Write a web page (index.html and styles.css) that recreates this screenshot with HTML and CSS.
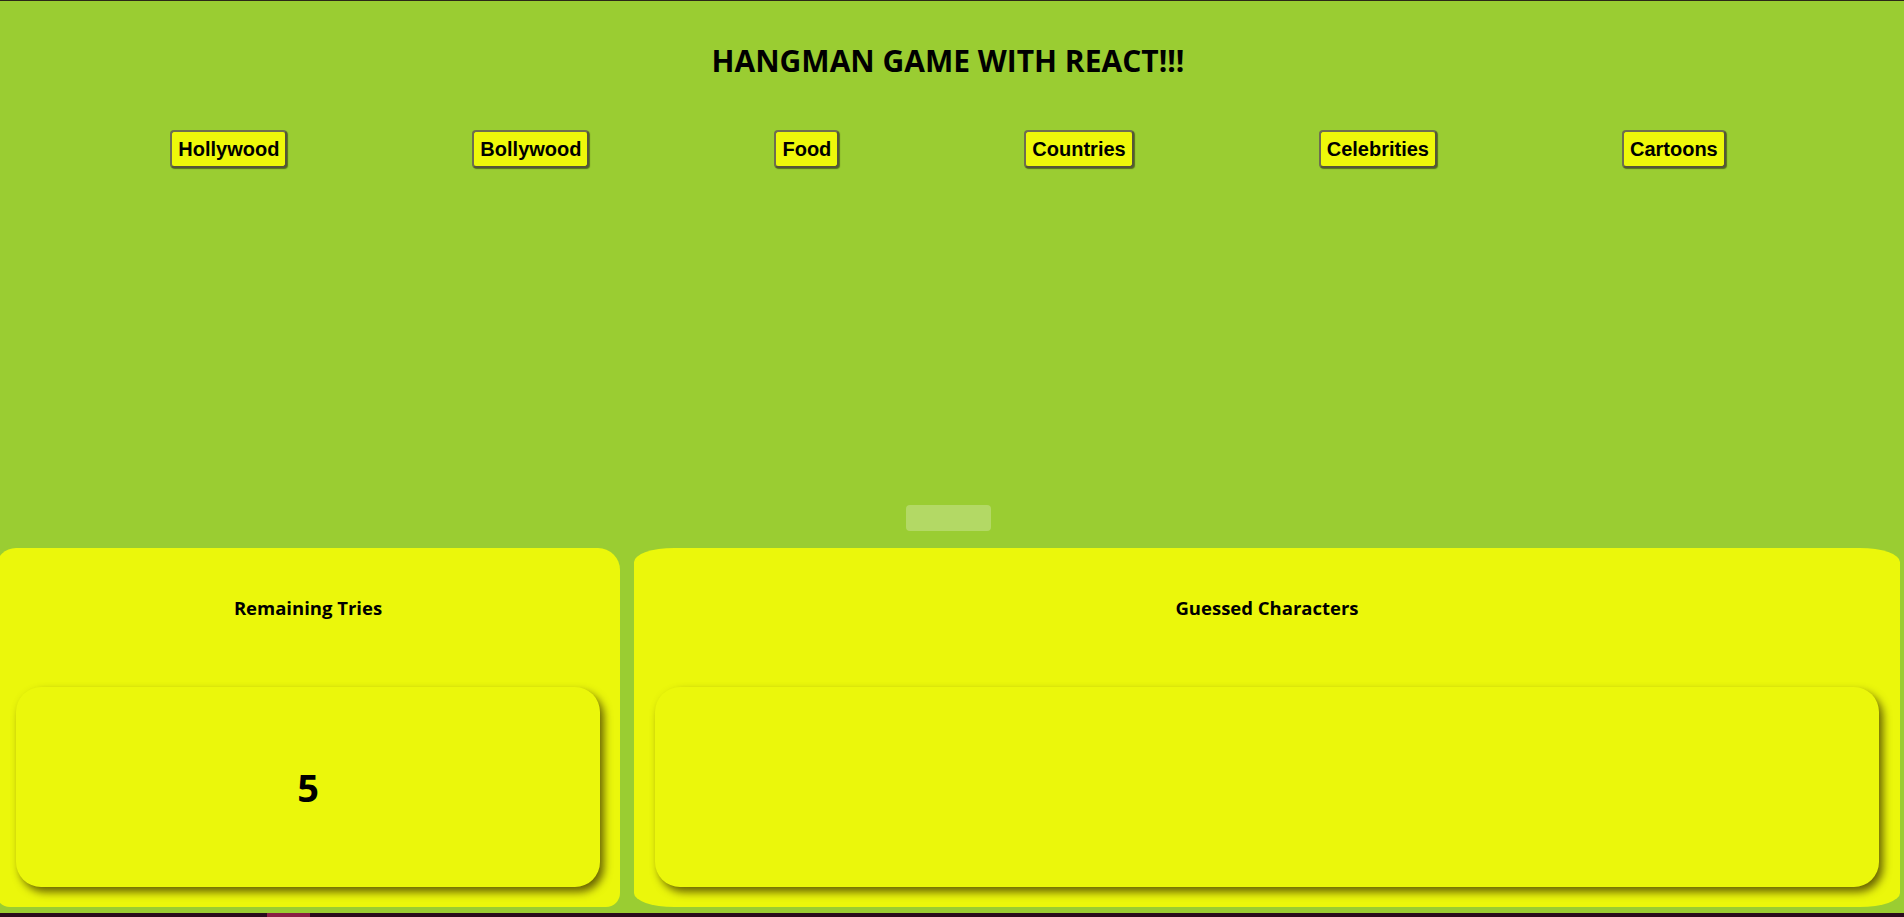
FILE: index.html
```html
<!DOCTYPE html>
<html lang="en">
<head>
<meta charset="utf-8">
<title>Hangman</title>
<link rel="stylesheet" href="styles.css">
</head>
<body>
<div class="app">
  <h1 class="title">HANGMAN GAME WITH REACT!!!</h1>
  <div class="categories">
    <button class="cat">Hollywood</button>
    <button class="cat">Bollywood</button>
    <button class="cat">Food</button>
    <button class="cat">Countries</button>
    <button class="cat">Celebrities</button>
    <button class="cat">Cartoons</button>
  </div>
  <div class="word-area">
    <div class="word-slot"></div>
  </div>
  <div class="panels">
    <section class="panel panel-left">
      <h3 class="panel-title">Remaining Tries</h3>
      <div class="inner"><span class="tries">5</span></div>
    </section>
    <section class="panel panel-right">
      <h3 class="panel-title">Guessed Characters</h3>
      <div class="inner"></div>
    </section>
  </div>
</div>
<div class="taskbar"><span class="task-active"></span></div>
</body>
</html>
```

FILE: styles.css
```css
html, body {
  margin: 0;
  padding: 0;
}
body {
  background: #2a0b1c;
  width: 1904px;
  height: 917px;
  overflow: hidden;
  font-family: "Open Sans", "Noto Sans", sans-serif;
}
.app {
  height: 912px;
  border-top: 1px solid #2c2818;
  background: #9acd32;
  display: flex;
  flex-direction: column;
  overflow: hidden;
}
.title {
  margin: 40px 0 0;
  height: 40px;
  line-height: 40px;
  font-size: 30px;
  font-weight: 700;
  text-align: center;
  color: #000;
  letter-spacing: 0;
  padding-right: 8px;
}
.categories {
  margin-top: 49px;
  display: flex;
  justify-content: center;
  gap: 185px;
  padding-right: 8px;
}
.cat {
  height: 38px;
  padding: 0 6px;
  font-family: "Liberation Sans", Arial, sans-serif;
  font-weight: 700;
  font-size: 20px;
  color: #000;
  background: #eef80a;
  border: 2px solid #55553a;
  border-top-color: #6e6e50;
  border-left-color: #6e6e50;
  border-radius: 4px;
  box-shadow: 1px 1px 1px rgba(0, 0, 0, 0.45);
}
.word-area {
  flex: 1;
  display: flex;
  align-items: flex-end;
  justify-content: center;
  padding-bottom: 17px;
  padding-right: 8px;
}
.word-slot {
  width: 85px;
  height: 26px;
  border-radius: 4px;
  background: rgba(255, 255, 255, 0.25);
}
.panels {
  height: 359px;
  margin: 0 4px 6px -4px;
  display: flex;
  gap: 14px;
}
.panel {
  background: #ebf70b;
  display: flex;
  flex-direction: column;
  padding: 0 20px 20px;
  box-sizing: border-box;
}
.panel-left {
  width: 624px;
  border-radius: 20px 22px 14px 14px;
}
.panel-right {
  flex: 1;
  padding-left: 21px;
  padding-right: 21px;
  border-radius: 40px / 14px;
}
.panel-title {
  margin: 48px 0 67px;
  height: 24px;
  line-height: 24px;
  font-size: 18.5px;
  font-weight: 700;
  text-align: center;
  color: #000;
}
.inner {
  height: 200px;
  border-radius: 25px;
  background: #ebf70b;
  box-shadow: 4px 5px 9px rgba(60, 50, 0, 0.75);
  display: flex;
  align-items: center;
  justify-content: center;
}
.tries {
  font-size: 38px;
  font-weight: 700;
  color: #000;
  line-height: 1;
}
.taskbar {
  height: 4px;
  background: #2a0b1c;
  display: flex;
  padding-left: 267px;
}
.task-active {
  width: 43px;
  background: #8a1e44;
}
```
